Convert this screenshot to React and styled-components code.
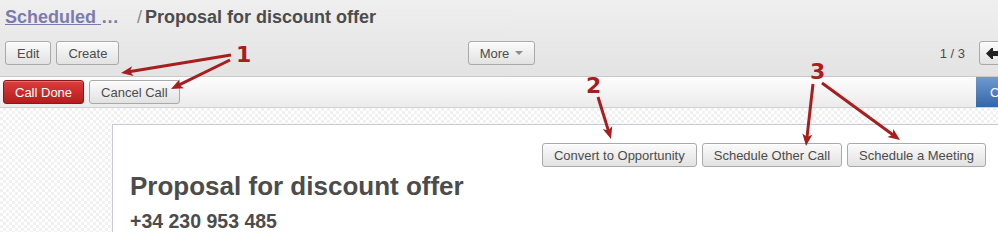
import React from 'react';
import styled, { createGlobalStyle } from 'styled-components';

const GlobalStyle = createGlobalStyle`
    body {
        margin: 0;
        font-family: 'Liberation Sans', Arial, sans-serif;
        color: #4c4c4c;
        background: #fff;
    }
`;

const Page = styled.div`
    position: relative;
    width: 998px;
    height: 232px;
    overflow: hidden;
`;

const ControlPanel = styled.div`
    background: linear-gradient(#efefef, #e3e3e3);
    padding: 6px 0 11px 5px;
`;

const Breadcrumb = styled.div`
    height: 22px;
    line-height: 22px;
    font-size: 18px;
    font-weight: 700;
    white-space: nowrap;
    margin-bottom: 13px;
`;

const CrumbLink = styled.a`
    color: #7c7bad;
    span {
        text-decoration: underline;
    }
`;

const Slash = styled.span`
    color: #8a8a8a;
    font-weight: 400;
    margin: 0 3px 0 18px;
`;

const Toolbar = styled.div`
    display: grid;
    grid-template-columns: 1fr auto 1fr;
    align-items: center;
`;

const Group = styled.div`
    display: flex;
    align-items: center;
    gap: ${(p) => p.gap || 5}px;
    justify-self: ${(p) => p.justify || 'start'};
    margin-right: ${(p) => p.pull || 0}px;
`;

const Button = styled.button`
    height: 24px;
    padding: 0 ${(p) => p.pad || 11}px;
    font-family: inherit;
    font-size: 13px;
    color: #4c4c4c;
    border: 1px solid #a9a9a9;
    border-radius: 3px;
    background: linear-gradient(#fbfbfb, #e2e2e2);
    box-shadow: inset 0 1px 0 #fff;
    white-space: nowrap;
    display: inline-flex;
    align-items: center;
    gap: 6px;
`;

const RedButton = styled(Button)`
    color: #fff;
    border-color: #8e1616;
    background: linear-gradient(#dd3d3d, #b41c1c);
    box-shadow: inset 0 1px 0 rgba(255, 255, 255, 0.25);
`;

const Caret = styled.span`
    width: 0;
    height: 0;
    border-left: 4px solid transparent;
    border-right: 4px solid transparent;
    border-top: 4px solid #8c8c8c;
`;

const PagerText = styled.span`
    font-size: 13px;
    color: #4c4c4c;
`;

const PagerButtons = styled.div`
    display: flex;
`;

const PagerButton = styled(Button)`
    padding: 0 6px;
    border-radius: ${(p) => (p.first ? '3px 0 0 3px' : '0 3px 3px 0')};
    margin-left: ${(p) => (p.first ? 0 : -1)}px;
`;

const StatusBar = styled.div`
    display: flex;
    align-items: stretch;
    height: 30px;
    border-top: 1px solid #c9c9c9;
    border-bottom: 1px solid #d0d0d0;
    background: linear-gradient(#fdfdfd, #ebebeb);
`;

const StatusButtons = styled.div`
    display: flex;
    align-items: center;
    gap: 5px;
    padding: 0 3px;
`;

const Stages = styled.div`
    margin-left: auto;
    margin-right: -78px;
    display: flex;
`;

const Stage = styled.div`
    box-sizing: border-box;
    width: 100px;
    padding-left: 14px;
    display: flex;
    align-items: center;
    font-size: 13px;
    color: #fff;
    background: linear-gradient(#6f9ad0, #3466a8);
`;

const Content = styled.div`
    padding-top: 16px;
    height: 200px;
    background-color: #fff;
    background-image: conic-gradient(
        #f1f1f1 25%,
        transparent 0 50%,
        #f1f1f1 0 75%,
        transparent 0
    );
    background-size: 6px 6px;
`;

const Sheet = styled.div`
    margin-left: 112px;
    width: 900px;
    height: 200px;
    background: #fff;
    border: 1px solid #c9c9d6;
    padding: 18px 0 0 17px;
    box-sizing: border-box;
`;

const SheetHeader = styled.div`
    display: flex;
    justify-content: flex-end;
    gap: 5px;
    padding-right: 25px;
`;

const Title = styled.h1`
    margin: 4px 0 0;
    font-size: 26px;
    line-height: 30px;
    font-weight: 700;
    color: #4c4c4c;
`;

const Phone = styled.div`
    margin-top: 9px;
    font-size: 19.5px;
    line-height: 22px;
    font-weight: 700;
`;

const Annotations = styled.svg`
    position: absolute;
    left: 0;
    top: 0;
    pointer-events: none;
`;

const Number = styled.text`
    font-family: 'DejaVu Sans', sans-serif;
    font-weight: 700;
    font-size: 22px;
    fill: #a81e1e;
`;

const arrows = [
    [231, 55, 121, 73],
    [230, 60, 171, 89],
    [598, 97, 611, 139],
    [813, 84, 806, 146],
    [822, 83, 900, 140],
];

const Arrow = ({ x1, y1, x2, y2 }) => {
    const dx = x2 - x1;
    const dy = y2 - y1;
    const len = Math.hypot(dx, dy);
    const ux = dx / len;
    const uy = dy / len;
    const head = 12;
    const half = 5;
    const bx = x2 - ux * head;
    const by = y2 - uy * head;
    const pts = [
        [x2, y2],
        [bx - uy * half, by + ux * half],
        [bx + ux * 3, by + uy * 3],
        [bx + uy * half, by - ux * half],
    ];
    return (
        <g>
            <line x1={x1} y1={y1} x2={bx + ux * 4} y2={by + uy * 4} stroke="#a81e1e" strokeWidth="3" />
            <polygon points={pts.map((p) => p.join(',')).join(' ')} fill="#a81e1e" />
        </g>
    );
};

const ArrowLeftIcon = () => (
    <svg width="12" height="11" viewBox="0 0 12 11">
        <path d="M0 5.5 L5.5 0 H7 V3 H12 V8 H7 V11 H5.5 Z" fill="#222" />
    </svg>
);

const ArrowRightIcon = () => (
    <svg width="12" height="11" viewBox="0 0 12 11">
        <path d="M12 5.5 L6.5 0 H5 V3 H0 V8 H5 V11 H6.5 Z" fill="#222" />
    </svg>
);

const App = () => (
    <Page>
        <GlobalStyle />
        <ControlPanel>
            <Breadcrumb>
                <CrumbLink>
                    <span>Scheduled </span>…
                </CrumbLink>
                <Slash>/</Slash>
                Proposal for discount offer
            </Breadcrumb>
            <Toolbar>
                <Group>
                    <Button>Edit</Button>
                    <Button>Create</Button>
                </Group>
                <Group>
                    <Button>
                        More <Caret />
                    </Button>
                </Group>
                <Group justify="end" gap={14} pull={-32}>
                    <PagerText>1 / 3</PagerText>
                    <PagerButtons>
                        <PagerButton first>
                            <ArrowLeftIcon />
                        </PagerButton>
                        <PagerButton>
                            <ArrowRightIcon />
                        </PagerButton>
                    </PagerButtons>
                </Group>
            </Toolbar>
        </ControlPanel>
        <StatusBar>
            <StatusButtons>
                <RedButton>Call Done</RedButton>
                <Button>Cancel Call</Button>
            </StatusButtons>
            <Stages>
                <Stage>Confirmed</Stage>
            </Stages>
        </StatusBar>
        <Content>
            <Sheet>
                <SheetHeader>
                    <Button>Convert to Opportunity</Button>
                    <Button>Schedule Other Call</Button>
                    <Button>Schedule a Meeting</Button>
                </SheetHeader>
                <Title>Proposal for discount offer</Title>
                <Phone>+34 230 953 485</Phone>
            </Sheet>
        </Content>
        <Annotations width="998" height="232">
            <Number x="236" y="62">1</Number>
            <Number x="586" y="93">2</Number>
            <Number x="810" y="79">3</Number>
            {arrows.map(([x1, y1, x2, y2], i) => (
                <Arrow key={i} x1={x1} y1={y1} x2={x2} y2={y2} />
            ))}
        </Annotations>
    </Page>
);

export default App;
